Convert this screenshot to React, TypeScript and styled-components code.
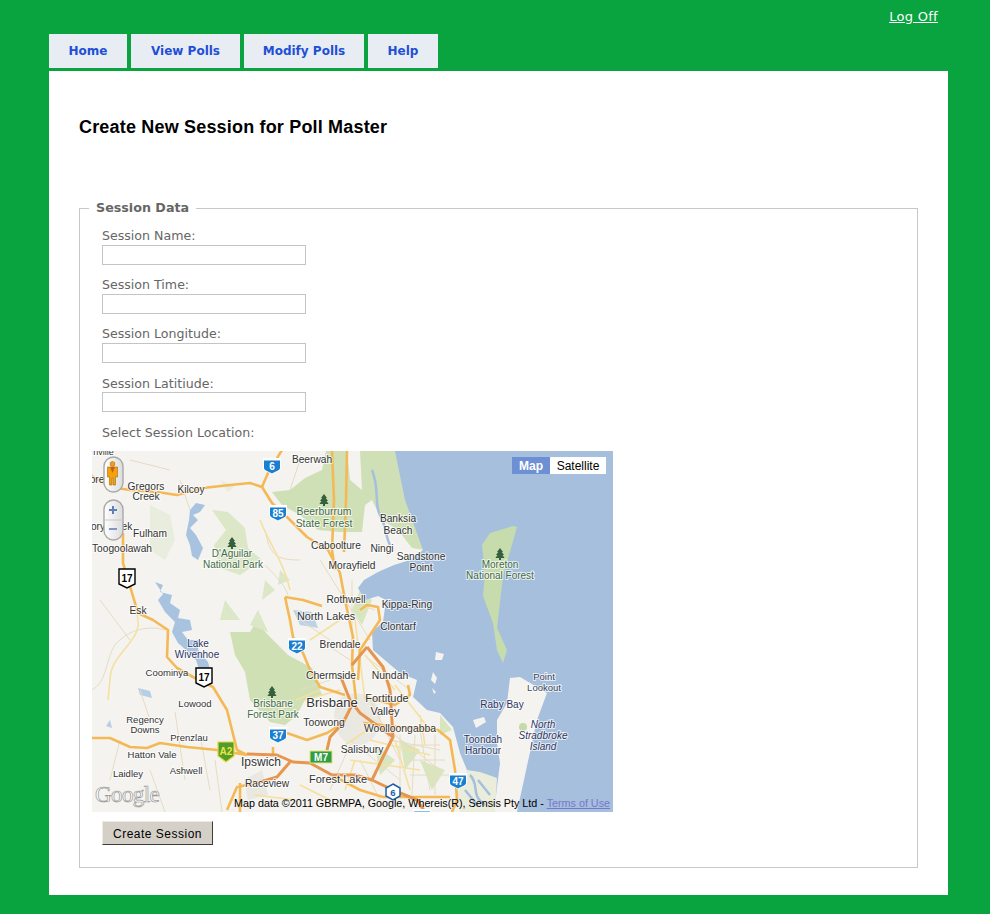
import React from "react";
import styled, { createGlobalStyle } from "styled-components";

const GlobalStyle = createGlobalStyle`
  html, body {
    margin: 0;
    padding: 0;
    background: #09a33f;
  }
`;

const tabs = ["Home", "View Polls", "Modify Polls", "Help"];
const tabWidths = [78, 109, 120, 70];
const fields = ["Session Name:", "Session Time:", "Session Longitude:", "Session Latitiude:"];

type Place = [string, number, number, number?, string?];

const PARK = "#3f6b45";
const WATER = "#2d3560";

// name, center x, baseline y, font size, colour
const places: Place[] = [
  ["rnville", 102, 455, 9],
  ["ore", 97, 483],
  ["Gregors", 146, 490],
  ["Creek", 146, 500],
  ["Kilcoy", 191, 493],
  ["Beerwah", 312, 463],
  ["ory", 98, 530],
  ["ek", 127, 530],
  ["Fulham", 150, 537],
  ["Toogoolawah", 122, 552],
  ["Esk", 138, 614],
  ["D'Aguilar", 232, 557, 10, PARK],
  ["National Park", 233, 568, 10, PARK],
  ["Beerburrum", 324, 515, 10.4, PARK],
  ["State Forest", 324, 527, 10.4, PARK],
  ["Caboolture", 336, 549],
  ["Morayfield", 352, 569],
  ["Rothwell", 346, 603],
  ["North Lakes", 326, 620, 10.8],
  ["Banksia", 398, 522],
  ["Beach", 398, 534],
  ["Ningi", 382, 552],
  ["Sandstone", 421, 560],
  ["Point", 421, 571],
  ["Moreton", 500, 568, 10, PARK],
  ["National Forest", 500, 579, 10, PARK],
  ["Kippa-Ring", 407, 608],
  ["Clontarf", 398, 630],
  ["Lake", 198, 647, 10, WATER],
  ["Wivenhoe", 197, 658, 10, WATER],
  ["Coominya", 167, 676, 9.5],
  ["Lowood", 195, 707, 9.5],
  ["Regency", 145, 723, 9.5],
  ["Downs", 145, 733, 9.5],
  ["Prenzlau", 189, 741, 9.5],
  ["Hatton Vale", 152, 758, 9.5],
  ["Laidley", 128, 777, 9.5],
  ["Ashwell", 186, 774, 9.5],
  ["Brendale", 340, 648],
  ["Chermside", 331, 679, 10.4],
  ["Nundah", 390, 679, 10.4],
  ["Fortitude", 387, 702, 11],
  ["Valley", 385, 715, 11],
  ["Brisbane", 332, 707, 13],
  ["Brisbane", 273, 707, 10, PARK],
  ["Forest Park", 273, 718, 10, PARK],
  ["Toowong", 324, 726, 10.4],
  ["Woolloongabba", 400, 732, 10.4],
  ["Salisbury", 362, 753, 10.4],
  ["Ipswich", 261, 766, 12],
  ["Forest Lake", 338, 783, 11],
  ["Raceview", 267, 787],
  ["Toondah", 483, 743, 10, WATER],
  ["Harbour", 483, 754, 10, WATER],
  ["Raby Bay", 502, 708, 10, WATER],
  ["Point", 544, 680, 9.5, "#3d4660"],
  ["Lookout", 544, 691, 9.5, "#3d4660"],
];

const islandLabels: Place[] = [
  ["North", 543, 728],
  ["Stradbroke", 543, 739],
  ["Island", 543, 750],
];

const roads = [
  "M90 475 L110 487 L130 490 L157 492 L177 495 L203 488 L230 485 L250 483 L262 487 L268 473 L282 450",
  "M262 487 L272 503 L287 517 L307 537 L328 550 L340 573 L345 600 L353 637 L352 665 L356 700",
  "M332 451 L334 500 L332 550 L335 570",
  "M347 451 L346 500 L344 552",
  "M123 533 L123 563 L132 593 L138 613 L153 620 L168 630 L167 657 L177 668 L193 677 L213 687 L227 710 L237 750 L247 755",
  "M90 738 L110 738 L130 747 L147 748 L160 743 L187 747 L217 750 L247 755",
  "M285 597 L290 620 L293 637 L303 653 L310 670 L320 687 L345 695",
  "M285 597 L303 600 L322 606 M360 610 L367 605 L378 607 L380 620 L370 635 L360 650 L358 680",
  "M273 747 L273 755 M287 733 L307 740 L327 733 L343 723",
  "M240 783 L240 812 M227 810 L237 787 L257 783",
  "M363 723 L400 727 L438 730 L450 740 L455 770 L457 800 L452 812",
  "M383 797 L450 797 M332 775 L360 790 L383 797",
  "M365 697 L395 705 L410 695 L408 685",
];

const motorways = [
  "M247 754 L277 755 L293 762 L310 763 L332 775",
  "M290 762 L277 777 L257 783",
  "M327 750 L330 737 L343 723 L352 705",
  "M340 675 L350 700 L360 713 L393 737 L383 757 L372 780 L393 790 L417 800 L425 812",
  "M367 647 L352 665 M367 647 L383 667 L390 690 L393 737",
  "M372 780 L355 775 L332 775",
];

const streets = [
  "M175 712 L185 780 M140 690 L150 720 M92 690 C110 680 105 650 120 640 C130 630 150 625 165 630",
  "M120 740 L110 780 M200 735 L210 790 M190 510 L180 480 M100 600 L130 640 M215 760 L222 812 M150 770 L165 812",
  "M300 560 C275 560 270 555 265 530 M265 565 C275 575 285 585 288 595 M300 460 L290 490 M130 460 L170 470",
  "M370 660 L410 690 M350 740 L400 780 M400 735 L400 790 M420 730 L430 790 M375 720 L440 770",
  "M300 690 L330 680 M300 620 L330 640 M360 760 L380 800 M320 560 L370 640 M370 700 L400 760",
  "M330 790 L350 745 M390 740 L440 750 M345 600 L375 610 M352 580 L352 640 M320 640 L350 660",
  "M410 745 L440 745 M405 760 L445 760 M410 775 L450 775 M415 735 L412 795 M435 735 L435 795",
];

const yellowRoads = [
  "M260 520 C270 545 285 565 290 590 M355 620 L365 700 M395 685 L430 730 M275 700 L290 720",
  "M135 610 C150 640 110 650 110 680 L108 700 M296 700 L320 690 M370 740 L430 755",
  "M310 640 L340 620 M350 760 L420 770 M395 740 L410 790 M345 790 L355 760 M365 655 L395 690",
  "M305 700 L340 690 M345 745 L375 725 M420 715 L425 745 M300 785 L330 800 M255 795 L295 800",
];

const sea = "M395 451 L405 500 L423 550 L410 560 L394 565 L378 572 L364 580 L358 588 L365 600 L378 596 L386 600 L383 622 L372 632 L373 650 L400 673 L417 680 L413 697 L427 710 L440 713 L453 727 L460 753 L467 770 L480 790 L490 812 L613 812 L613 451 Z";
const lakeUpper = "M196 503 L205 505 L200 512 L193 515 L198 520 L190 528 L196 535 L203 548 L198 560 L192 556 L190 545 L186 535 L189 520 L190 510 Z";
const lakeLower = "M155 582 L163 585 L160 592 L172 595 L170 603 L180 610 L178 618 L190 620 L192 630 L182 632 L188 640 L200 640 L198 650 L208 662 L213 680 L200 672 L196 660 L186 650 L178 643 L172 632 L175 622 L165 612 L158 600 L163 594 Z";

const Page = styled.div`
  width: 990px;
  height: 914px;
  background: #09a33f;
  font-family: "DejaVu Sans", Verdana, sans-serif;
  overflow: hidden;
`;

const TopBar = styled.div`
  display: flex;
  justify-content: flex-end;
  height: 34px;
  padding: 9px 52px 0 0;
  box-sizing: border-box;
`;

const LogOff = styled.a`
  color: #fff;
  font-size: 13px;
  line-height: 16px;
  letter-spacing: 0.3px;
  text-decoration: underline;
`;

const TabBar = styled.nav`
  display: flex;
  gap: 4px;
  height: 37px;
  margin-left: 49px;
`;

const Tab = styled.a<{ $width: number }>`
  display: flex;
  align-items: center;
  justify-content: center;
  width: ${(p) => p.$width}px;
  height: 34px;
  background: #e8edf4;
  color: #1f4fd6;
  font-size: 12px;
  font-weight: 700;
  text-decoration: none;
`;

const Content = styled.main`
  width: 899px;
  height: 824px;
  margin-left: 49px;
  padding: 45px 30px 0;
  box-sizing: border-box;
  background: #fff;
`;

const Title = styled.h1`
  margin: 0 0 62px;
  font-family: "Liberation Sans", Arial, sans-serif;
  font-size: 18px;
  line-height: 22px;
  font-weight: 700;
  letter-spacing: 0.18px;
  color: #000;
`;

const Fieldset = styled.fieldset`
  margin: 0;
  padding: 10px 12px 22px;
  height: 668px;
  box-sizing: border-box;
  border: 1px solid #c8c8c8;
  min-width: 0;
`;

const Legend = styled.legend`
  margin-left: -3px;
  padding: 0 7px;
  color: #666;
  font-size: 12.7px;
  line-height: 16px;
  font-weight: 700;
`;

const Field = styled.div`
  margin: 0 0 10px 10px;
`;

const Label = styled.label<{ $low?: boolean }>`
  display: block;
  height: 19px;
  color: #666;
  font-size: 12.6px;
  line-height: ${(p) => (p.$low ? "21px" : "19px")};
`;

const TextInput = styled.input`
  display: block;
  width: 204px;
  height: 20px;
  padding: 0;
  box-sizing: border-box;
  border: 1px solid #c4c4c4;
  background: #fff;
`;

const MapFrame = styled.div`
  position: relative;
  width: 521px;
  height: 361px;
  overflow: hidden;
  background: #f4f3ef;
`;

const MapDrawing = styled.svg`
  display: block;
`;

const PlaceName = styled.text<{ $italic?: boolean }>`
  font-family: "Liberation Sans", Arial, sans-serif;
  font-style: ${(p) => (p.$italic ? "italic" : "normal")};
  text-anchor: middle;
  stroke: rgba(255, 255, 255, 0.7);
  stroke-width: 2px;
  paint-order: stroke;
`;

const ShieldNumber = styled.text`
  font-family: "Liberation Sans", Arial, sans-serif;
  font-weight: 700;
  text-anchor: middle;
`;

const GoogleMark = styled.text`
  font-family: "Liberation Serif", serif;
  font-size: 23px;
  letter-spacing: -0.6px;
  fill: rgba(255, 255, 255, 0.75);
  stroke: #9a9a98;
  stroke-width: 0.7px;
`;

const MapTypes = styled.div`
  position: absolute;
  top: 6px;
  right: 7px;
  display: flex;
  font-family: "Liberation Sans", Arial, sans-serif;
  font-size: 12px;
  line-height: 18px;
`;

const MapType = styled.span<{ $active?: boolean }>`
  width: ${(p) => (p.$active ? "38px" : "56px")};
  height: 17px;
  text-align: center;
  background: ${(p) => (p.$active ? "#6d8fd3" : "#fff")};
  color: ${(p) => (p.$active ? "#fff" : "#000")};
  font-weight: ${(p) => (p.$active ? 700 : 400)};
`;

const Attribution = styled.div`
  position: absolute;
  right: 3px;
  bottom: 3px;
  font-family: "Liberation Sans", Arial, sans-serif;
  font-size: 10.75px;
  line-height: 12px;
  color: #000;
  white-space: nowrap;
`;

const TermsLink = styled.a`
  color: #7777cc;
  text-decoration: underline;
`;

const SubmitButton = styled.button`
  display: block;
  width: 111px;
  height: 24px;
  margin: 9px 0 0 10px;
  padding: 2px 0 0;
  box-sizing: border-box;
  background: #d4d0c8;
  border: 1px solid;
  border-color: #eeeae2 #3f3d38 #3f3d38 #eeeae2;
  font-family: "Liberation Sans", Arial, sans-serif;
  font-size: 12px;
  letter-spacing: 0.5px;
  color: #000;
`;

const BlueShield = ({ x, y, n }: { x: number; y: number; n: string }) => (
  <g transform={`translate(${x} ${y})`}>
    <path d="M-9 -8 H9 V2 C9 5 3 6 0 8.5 C-3 6 -9 5 -9 2 Z" fill="#fff" />
    <path d="M-8 -5.5 H8 V2 C8 4.5 3 5.5 0 7.5 C-3 5.5 -8 4.5 -8 2 Z" fill="#1a7fd0" />
    <ShieldNumber y={3.5} fontSize={10} fill="#fff">
      {n}
    </ShieldNumber>
  </g>
);

const StateShield = ({ x, y, n }: { x: number; y: number; n: string }) => (
  <g transform={`translate(${x} ${y})`}>
    <path d="M-8 -9 H8 V6 L0 10 L-8 6 Z" fill="#fff" stroke="#000" strokeWidth={1.4} />
    <ShieldNumber y={4} fontSize={10} fill="#000">
      {n}
    </ShieldNumber>
  </g>
);

const MapPicture = () => (
  <MapDrawing width={521} height={361} viewBox="92 451 521 361">
    <defs>
      <linearGradient id="pill" x1="0" x2="1" y1="0" y2="0">
        <stop offset="0" stopColor="#ffffff" />
        <stop offset="1" stopColor="#dcdcdc" />
      </linearGradient>
    </defs>
    <rect x={92} y={451} width={521} height={361} fill="#f4f3ef" />

    {/* forests and parks */}
    <path d="M272 492 L290 490 L305 478 L322 470 L326 451 L347 451 L350 480 L362 490 L360 451 L398 451 L408 500 L425 550 L412 548 L398 530 L382 520 L372 500 L365 505 L362 532 L340 532 L318 530 L300 515 L282 505 Z" fill="#cfdfb6" />
    <path d="M212 510 L228 512 L245 528 L248 548 L262 560 L240 575 L220 568 L214 545 L226 530 Z" fill="#dbe7c7" />
    <path d="M150 505 L170 515 L175 540 L165 560 L150 550 Z M220 480 L235 486 L228 492 Z" fill="#e8eddd" />
    <path d="M230 632 L250 632 L256 622 L270 637 L288 655 L312 668 L322 695 L305 700 L296 716 L285 725 L270 722 L250 700 L245 672 L235 655 Z" fill="#cfe0b4" />
    <path d="M265 580 L275 590 L262 600 Z M280 570 L290 580 L278 585 Z M258 610 L268 632 L250 625 Z M225 600 L240 620 L220 620 Z" fill="#dbe7c7" />
    <path d="M360 590 L372 600 L362 625 L352 610 Z M400 740 L420 750 L405 770 Z M375 745 L395 760 L380 775 Z M420 760 L445 770 L432 790 Z M440 715 L452 730 L440 735 Z" fill="#d8e6c0" />
    <path d="M338 700 C350 690 370 690 380 710 C385 730 370 750 350 745 C335 738 330 715 338 700 Z M244 780 L262 770 L268 795 L248 800 Z" fill="#e9e8e1" />

    {/* sea, bay and lakes */}
    <path d={sea} fill="#a5bfdd" />
    <path d="M510 678 L520 677 L547 693 L537 720 L517 812 L494 812 L500 763 L497 743 L497 720 L507 703 Z" fill="#f4f3ef" />
    <path d="M467 770 L480 772 L497 778 L495 812 L460 812 L455 790 Z" fill="#eaeddc" />
    <path d="M470 775 C480 785 470 795 485 805 M478 780 L490 795 M465 790 L478 806" fill="none" stroke="#a5bfdd" strokeWidth={2.5} />
    <circle cx={523} cy={727} r={4} fill="#c5dba8" />
    <path d="M517 527 L513 526 L490 533 L482 545 L485 573 L483 596 L493 623 L497 650 L503 663 L507 650 L497 628 L503 576 Z" fill="#c7dcac" />
    <path d="M436 652 L444 654 L442 660 L435 660 Z M433 672 L437 678 L435 684 L431 680 Z M432 688 L436 692 L434 694 Z M473 720 L484 717 L486 722 L476 728 Z" fill="#f4f3ef" />
    <path d="M372 470 C380 490 374 505 380 515 C386 525 385 535 390 545" fill="none" stroke="#a5bfdd" strokeWidth={2.5} />
    <path d={`${lakeUpper} ${lakeLower}`} fill="#a8c3e0" />
    <path d="M138 688 L150 691 L152 698 L140 695 Z M110 720 L112 728 L106 726 Z" fill="#b6cfe6" />
    <path d="M293 610 L312 612 L318 628 L300 625 Z" fill="#bcd2e6" />

    {/* roads */}
    <path d={streets.join(" ")} fill="none" stroke="#e6dcc0" strokeWidth={1} />
    <path d={yellowRoads.join(" ")} fill="none" stroke="#f5e0a0" strokeWidth={1.6} />
    <path d={roads.join(" ")} fill="none" stroke="#f4b955" strokeWidth={2.6} strokeLinejoin="round" />
    <path d={motorways.join(" ")} fill="none" stroke="#e6964e" strokeWidth={3} strokeLinejoin="round" />

    {/* park trees */}
    {[
      [324, 500],
      [232, 543],
      [500, 554],
      [272, 692],
    ].map(([x, y]) => (
      <path
        key={`${x}-${y}`}
        transform={`translate(${x} ${y})`}
        d="M0 -6 L3 -2 H1.8 L4 1 H2.5 L4.6 4 H1 V6 H-1 V4 H-4.6 L-2.5 1 H-4 L-1.8 -2 H-3 Z"
        fill="#35603f"
      />
    ))}

    {/* place names */}
    {places.map(([name, x, y, size, color]) => (
      <PlaceName key={`${name}-${x}`} x={x} y={y} fontSize={size ?? 10.2} fill={color ?? "#333"}>
        {name}
      </PlaceName>
    ))}
    {islandLabels.map(([name, x, y]) => (
      <PlaceName key={name} x={x} y={y} fontSize={10} fill={WATER} $italic>
        {name}
      </PlaceName>
    ))}

    {/* route shields */}
    <BlueShield x={272} y={466} n="6" />
    <BlueShield x={278} y={513} n="85" />
    <BlueShield x={297} y={646} n="22" />
    <BlueShield x={278} y={735} n="37" />
    <BlueShield x={458} y={781} n="47" />
    <BlueShield x={422} y={817} n="84" />
    <StateShield x={127} y={578} n="17" />
    <StateShield x={204} y={677} n="17" />
    <g transform="translate(393 792)">
      <path d="M0 -8 L7 -4 V4 L0 8 L-7 4 V-4 Z" fill="#fff" stroke="#1c5fa8" strokeWidth={1.5} />
      <ShieldNumber y={3.5} fontSize={9.5} fill="#1c5fa8">
        6
      </ShieldNumber>
    </g>
    <g transform="translate(226 751)">
      <path d="M-8 -9 H8 V5 L0 11 L-8 5 Z" fill="#4f9d2f" stroke="#e6d83a" strokeWidth={1.2} />
      <ShieldNumber y={4} fontSize={10} fill="#f3e23c">
        A2
      </ShieldNumber>
    </g>
    <g transform="translate(321 757)">
      <rect x={-11} y={-6} width={22} height={12} fill="#2f9e47" stroke="#e6e27a" />
      <ShieldNumber y={4} fontSize={10} fill="#fff">
        M7
      </ShieldNumber>
    </g>

    <GoogleMark x={95} y={802}>
      Google
    </GoogleMark>

    {/* pegman */}
    <rect x={104} y={457} width={19} height={35} rx={9.5} fill="url(#pill)" stroke="#a9a9a9" strokeWidth={1.4} />
    <g fill="#f2a20c" stroke="#a86a08" strokeWidth={0.6}>
      <circle cx={112.5} cy={464} r={2.4} />
      <path d="M107.5 467 H117.5 V477 H115.5 V485 H113 V478 H112 V485 H109.5 V477 H107.5 Z" />
    </g>
    <path d="M110 467 H115 L112.5 473 Z" fill="#d9541e" />

    {/* zoom control */}
    <rect x={104} y={500} width={19} height={40} rx={9.5} fill="url(#pill)" stroke="#a9a9a9" strokeWidth={1.4} />
    <path d="M104 520 H123" stroke="#c8c8c8" />
    <path d="M109 510 H117 M113 506 V514" stroke="#5f7fb8" strokeWidth={2} />
    <path d="M109 529 H117" stroke="#7f97c4" strokeWidth={2} />
  </MapDrawing>
);

const App = () => (
  <Page>
    <GlobalStyle />
    <TopBar>
      <LogOff href="#">Log Off</LogOff>
    </TopBar>
    <TabBar>
      {tabs.map((tab, i) => (
        <Tab key={tab} href="#" $width={tabWidths[i]}>
          {tab}
        </Tab>
      ))}
    </TabBar>
    <Content>
      <Title>Create New Session for Poll Master</Title>
      <Fieldset>
        <Legend>Session Data</Legend>
        {fields.map((field, i) => (
          <Field key={field}>
            <Label $low={i === 3}>{field}</Label>
            <TextInput type="text" />
          </Field>
        ))}
        <Field>
          <Label $low>Select Session Location:</Label>
        </Field>
        <MapFrame>
          <MapPicture />
          <MapTypes>
            <MapType $active>Map</MapType>
            <MapType>Satellite</MapType>
          </MapTypes>
          <Attribution>
            Map data ©2011 GBRMPA, Google, Whereis(R), Sensis Pty Ltd - <TermsLink href="#">Terms of Use</TermsLink>
          </Attribution>
        </MapFrame>
        <SubmitButton>Create Session</SubmitButton>
      </Fieldset>
    </Content>
  </Page>
);

export default App;
